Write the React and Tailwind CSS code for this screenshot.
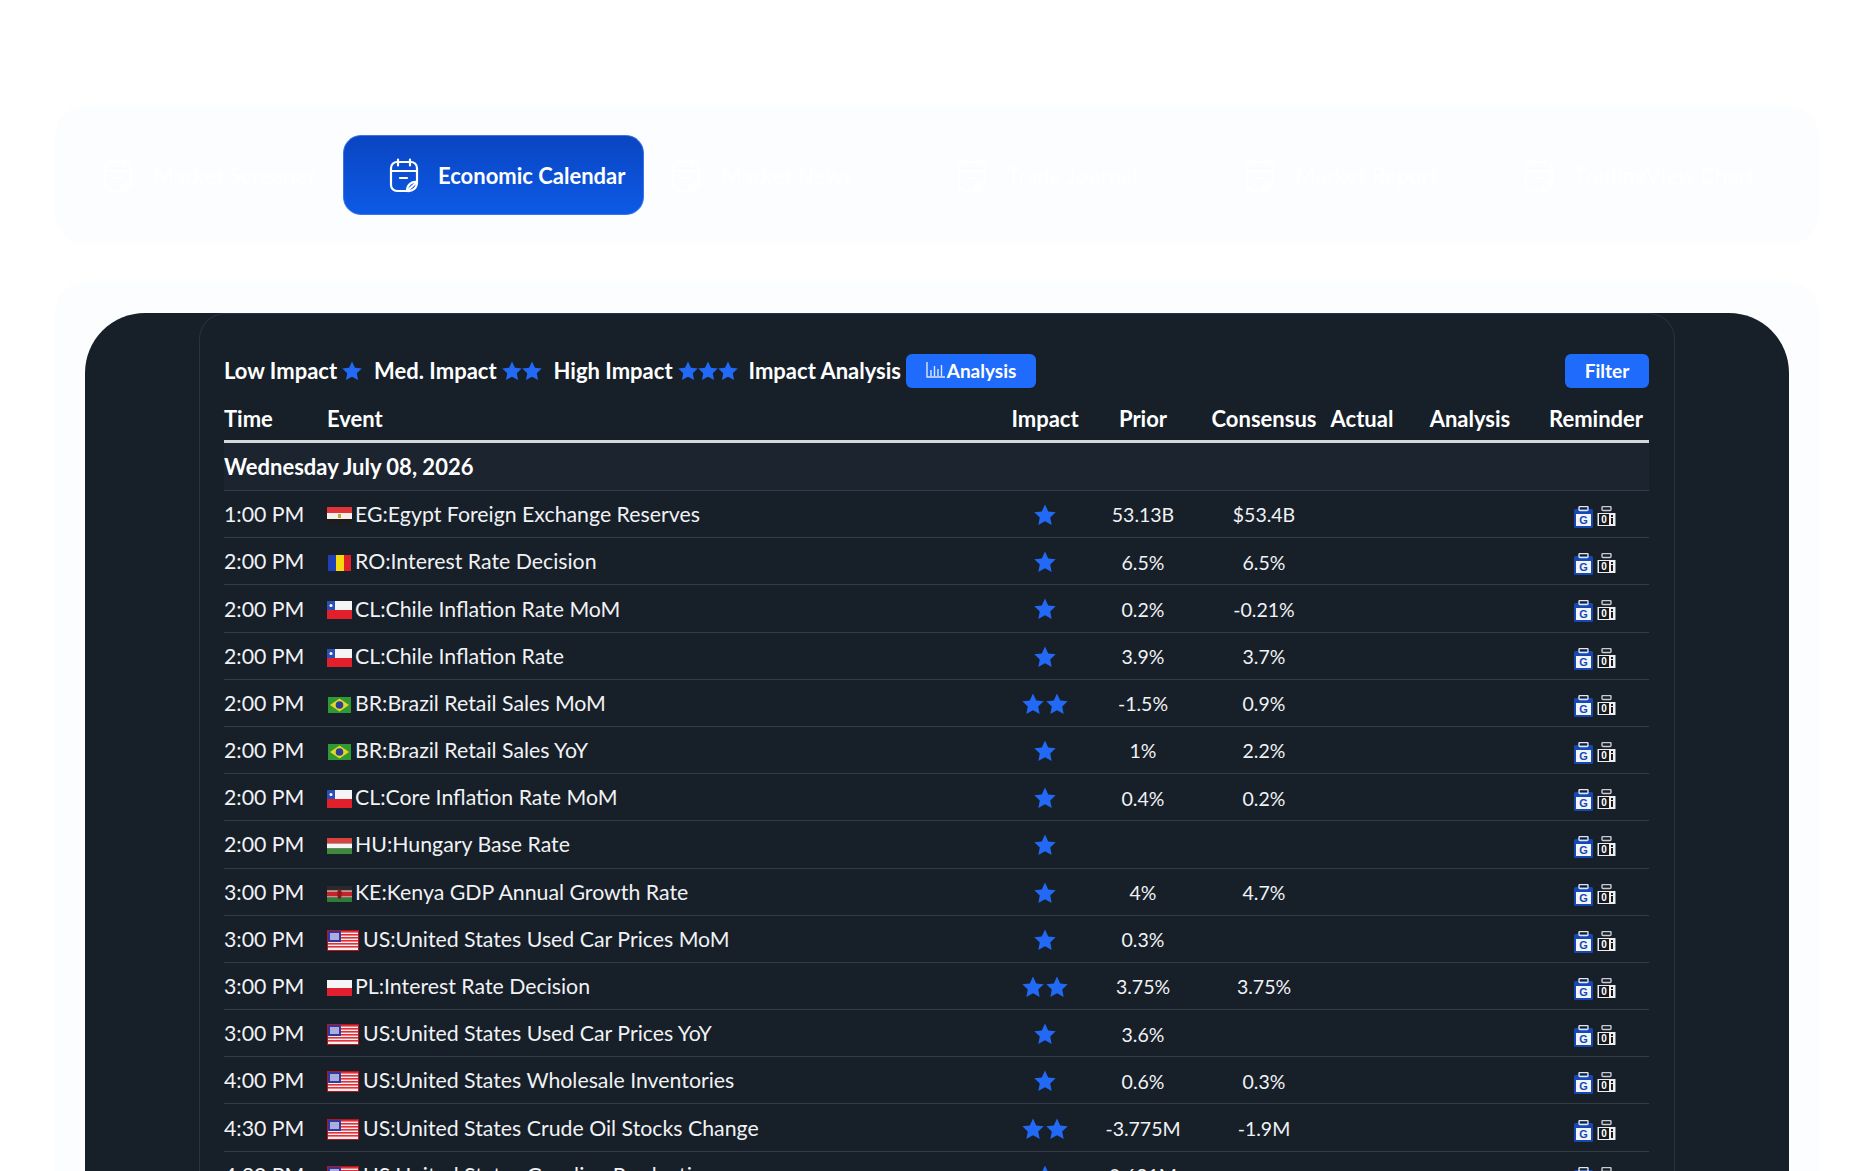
import React from 'react';

const font = { fontFamily: '"Lato", "Noto Sans", sans-serif' };

const ROWS = [
  ['1:00 PM', 'eg', 'EG:Egypt Foreign Exchange Reserves', 1, '53.13B', '$53.4B'],
  ['2:00 PM', 'ro', 'RO:Interest Rate Decision', 1, '6.5%', '6.5%'],
  ['2:00 PM', 'cl', 'CL:Chile Inflation Rate MoM', 1, '0.2%', '-0.21%'],
  ['2:00 PM', 'cl', 'CL:Chile Inflation Rate', 1, '3.9%', '3.7%'],
  ['2:00 PM', 'br', 'BR:Brazil Retail Sales MoM', 2, '-1.5%', '0.9%'],
  ['2:00 PM', 'br', 'BR:Brazil Retail Sales YoY', 1, '1%', '2.2%'],
  ['2:00 PM', 'cl', 'CL:Core Inflation Rate MoM', 1, '0.4%', '0.2%'],
  ['2:00 PM', 'hu', 'HU:Hungary Base Rate', 1, '', ''],
  ['3:00 PM', 'ke', 'KE:Kenya GDP Annual Growth Rate', 1, '4%', '4.7%'],
  ['3:00 PM', 'us', 'US:United States Used Car Prices MoM', 1, '0.3%', ''],
  ['3:00 PM', 'pl', 'PL:Interest Rate Decision', 2, '3.75%', '3.75%'],
  ['3:00 PM', 'us', 'US:United States Used Car Prices YoY', 1, '3.6%', ''],
  ['4:00 PM', 'us', 'US:United States Wholesale Inventories', 1, '0.6%', '0.3%'],
  ['4:30 PM', 'us', 'US:United States Crude Oil Stocks Change', 2, '-3.775M', '-1.9M'],
  ['4:30 PM', 'us', 'US:United States Gasoline Production', 1, '0.621M', ''],
];

const TABS = [
  { label: 'Market Screener', cls: 'w-[288px] pl-[48px]' },
  { label: 'Economic Calendar', active: true },
  { label: 'Market News', cls: 'w-[286px] pl-[27px]' },
  { label: 'Trade Journal', cls: 'w-[286px] pl-[27px]' },
  { label: 'Market Report', cls: 'w-[280px] pl-[29px]' },
  { label: 'TradingView Chart', cls: 'flex-1 pl-[28px]' },
];

function CalendarNote() {
  return (
    <svg width="30" height="35" viewBox="0 0 30 35" fill="none" stroke="currentColor" strokeWidth="2.2" strokeLinecap="round" strokeLinejoin="round">
      <path d="M9 1.5v6M21 1.5v6" />
      <path d="M18 33H8a6 6 0 0 1-6-6V10a6 6 0 0 1 6-6h14a6 6 0 0 1 6 6v14z" />
      <path d="M2 13h26" />
      <path d="M11 20h7" />
      <path d="M28 24c-6-.5-10 3-10 9 6 .5 10-3 10-9z" />
    </svg>
  );
}

function Star({ size = 22 }) {
  return (
    <svg width={size} height={size} viewBox="0 0 24 24" fill="#2269f5">
      <path d="M12 .6l3.5 7.5 8.2 1-6 5.6 1.6 8.2L12 18.8l-7.3 4.1 1.6-8.2-6-5.6 8.2-1z" />
    </svg>
  );
}

function Stars({ n, size, gap }) {
  return (
    <span className={`inline-flex items-center ${gap}`}>
      {Array.from({ length: n }).map((_, i) => <Star key={i} size={size} />)}
    </span>
  );
}

function Flag({ code }) {
  if (code === 'us') {
    return (
      <svg width="32" height="21" viewBox="0 0 32 21" className="shrink-0 w-[32px] mr-[1px] mt-[1px]">
        <rect width="32" height="21" fill="#b3161f" />
        <rect x="1" y="1" width="30" height="19" fill="#f6eeee" />
        {[1, 4, 7, 10, 13, 16].map(y => <rect key={y} x="1" y={y} width="30" height="1.6" fill="#e0303a" />)}
        <rect x="1" y="1" width="13" height="11" fill="#34389c" />
        <rect x="3" y="3" width="9" height="7" fill="#a9aede" />
      </svg>
    );
  }
  return (
    <svg width="25" height="18" viewBox="0 0 25 18" className="shrink-0 mt-[2px]">
      {code === 'eg' && <>
        <rect width="25" height="6" fill="#e0343a" /><rect y="6" width="25" height="6" fill="#f5f0ea" /><rect y="12" width="25" height="6" fill="#1c1c1c" />
        <rect x="11" y="7" width="3" height="4" fill="#c9a43c" />
      </>}
      {code === 'ro' && <>
        <rect x="1" y="1" width="8" height="16" fill="#1f3fb5" /><rect x="9" y="1" width="8" height="16" fill="#f5d90a" /><rect x="17" y="1" width="7" height="16" fill="#e01f2d" />
      </>}
      {code === 'cl' && <>
        <rect width="25" height="9" fill="#f5f5f5" /><rect y="9" width="25" height="9" fill="#e2202c" /><rect width="8" height="9" fill="#2a4fb5" />
        <circle cx="4" cy="4.5" r="1.5" fill="#fff" />
      </>}
      {code === 'br' && <>
        <rect x="1" y="1" width="23" height="16" fill="#2f9a33" /><path d="M12.5 2.5L22 9l-9.5 6.5L3 9z" fill="#e8d52a" /><circle cx="12.5" cy="9" r="3.8" fill="#2a3f96" />
      </>}
      {code === 'hu' && <>
        <rect y="1" width="25" height="5.5" fill="#d8423d" /><rect y="6.5" width="25" height="5" fill="#f5f5f5" /><rect y="11.5" width="25" height="5.5" fill="#3f8a3a" />
      </>}
      {code === 'ke' && <>
        <rect y="1" width="25" height="5" fill="#2a2a2a" /><rect y="6" width="25" height="6" fill="#c4242a" /><rect y="5.5" width="25" height="1" fill="#eee" /><rect y="11.5" width="25" height="1" fill="#eee" /><rect y="12.5" width="25" height="4.5" fill="#2d7d36" />
        <ellipse cx="12.5" cy="9" rx="2.2" ry="5" fill="#8a1a1a" />
      </>}
      {code === 'pl' && <>
        <rect y="1" width="25" height="8" fill="#f5f5f5" /><rect y="9" width="25" height="8" fill="#e0202e" />
      </>}
    </svg>
  );
}

// the two little add-to-calendar badges, google and outlook
function ReminderIcons() {
  return (
    <span className="inline-flex items-center gap-[4px] mt-[4px] -ml-[2px]">
      <svg width="19" height="22" viewBox="0 0 19 22">
        <rect x="0" y="3" width="19" height="19" rx="1.5" fill="#1648b4" />
        <rect x="5" y="0.5" width="9" height="4" rx="1" fill="none" stroke="#dfe6f5" strokeWidth="1.4" />
        <rect x="2" y="8" width="15" height="12" fill="#f2f5fc" />
        <text x="9.5" y="18" textAnchor="middle" fontSize="11" fontWeight="700" fill="#1648b4" fontFamily="Liberation Sans, sans-serif">G</text>
      </svg>
      <svg width="19" height="22" viewBox="0 0 19 22">
        <rect x="5" y="0.5" width="9" height="4" rx="1" fill="none" stroke="#c9ccd2" strokeWidth="1.4" />
        <rect x="0.5" y="7" width="18" height="13" fill="#eceef0" />
        <rect x="2" y="8" width="10" height="11" fill="#15181d" />
        <text x="7" y="17" textAnchor="middle" fontSize="10" fontWeight="700" fill="#fff" fontFamily="Liberation Sans, sans-serif">0</text>
        <rect x="14" y="9" width="2" height="2" fill="#15181d" />
        <rect x="14" y="12" width="2" height="6" fill="#15181d" />
      </svg>
    </span>
  );
}

const gridCols = 'grid grid-cols-[103px_679px_78px_118px_124px_72px_144px_108px]';

function Legend({ label, n }) {
  return (
    <span className="flex items-center gap-[5px]">
      <span>{label}</span>
      <Stars n={n} size={20} gap="gap-[0px]" />
    </span>
  );
}

export default function App() {
  return (
    <div className="h-[1171px] overflow-hidden bg-white pt-[105px] px-[55px] text-white" style={font}>
      <div className="h-[140px] rounded-[32px] bg-[#fbfdfe] flex items-center">
        {TABS.map(t => t.active ? (
          <div key={t.label} className="w-[301px] h-[80px] shrink-0 flex items-center gap-[19px] pl-[45px] rounded-[18px] border border-[#3a74e6] bg-gradient-to-b from-[#0a45c2] to-[#0d5ae6] text-[22px] font-bold whitespace-nowrap">
            <CalendarNote />
            <span>{t.label}</span>
          </div>
        ) : (
          <div key={t.label} className={`${t.cls} shrink-0 flex items-center gap-[20px] text-[22px] font-bold text-white whitespace-nowrap`}>
            <CalendarNote />
            <span>{t.label}</span>
          </div>
        ))}
      </div>

      <div className="mt-[36px] h-[900px] rounded-t-[32px] bg-[#fbfdfe] px-[30px] pt-[32px]">
        <div className="h-full rounded-t-[60px] bg-[#171f29] px-[114px]">
          <div className="h-full rounded-t-[26px] border border-b-0 border-[#2a323d] pl-[24px] pr-[25px]">
            <div className="flex items-center h-[34px] mt-[40px] text-[22px] font-bold leading-none">
              <div className="flex items-center gap-[12px]">
                <Legend label="Low Impact" n={1} />
                <Legend label="Med. Impact" n={2} />
                <Legend label="High Impact" n={3} />
              </div>
              <span className="ml-[11px]">Impact Analysis</span>
              <button className="ml-[5px] flex items-center gap-[1px] h-[34px] w-[130px] justify-center rounded-[6px] bg-[#1f6bfb] text-[19px] pb-[2px]">
                <svg width="20" height="18" viewBox="0 0 20 18" fill="none" stroke="#dbe7ff" strokeWidth="1.4">
                  <path d="M1 1v15h18M5 15V9M8.5 15V5M12 15V8M15.5 15V4" />
                </svg>
                Analysis
              </button>
              <button className="ml-auto h-[34px] w-[84px] rounded-[6px] bg-[#1f6bfb] text-[19px] pb-[2px]">Filter</button>
            </div>

            <div className={`${gridCols} mt-[8px] h-[47px] items-center text-[22px] font-bold border-b-[3px] border-[#d5d8da]`}>
              <span>Time</span>
              <span>Event</span>
              <span className="text-center">Impact</span>
              <span className="text-center">Prior</span>
              <span className="text-center">Consensus</span>
              <span className="text-center">Actual</span>
              <span className="text-center">Analysis</span>
              <span className="text-center">Reminder</span>
            </div>

            <div className="h-[48px] flex items-center text-[22px] font-bold bg-[#1c2430] border-b border-[#333b46]">
              Wednesday July 08, 2026
            </div>

            {ROWS.map((r, i) => (
              <div key={i} className={`${gridCols} h-[47.2px] pt-[2px] items-center text-[21.3px] text-[#f0f2f4] border-b border-[#333b46]`}>
                <span>{r[0]}</span>
                <span className="flex items-center gap-[3px]">
                  <Flag code={r[1]} />
                  <span>{r[2]}</span>
                </span>
                <span className="flex justify-center"><Stars n={r[3]} size={22} gap="gap-[2px]" /></span>
                <span className="text-center text-[19.5px]">{r[4]}</span>
                <span className="text-center text-[19.5px]">{r[5]}</span>
                <span />
                <span />
                <span className="flex justify-center"><ReminderIcons /></span>
              </div>
            ))}
          </div>
        </div>
      </div>
    </div>
  );
}
